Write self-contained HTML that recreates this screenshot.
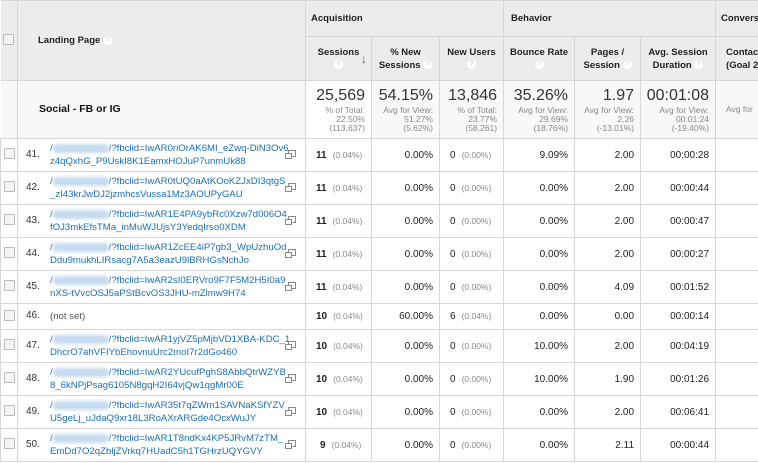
<!DOCTYPE html>
<html><head><meta charset="utf-8"><style>
body{margin:0;width:758px;height:463px;overflow:hidden;background:#fff;font-family:"Liberation Sans",Arial,sans-serif;color:#222}
table{border-collapse:collapse;table-layout:fixed;width:758px}
td{padding:0;border:1px solid #d6d6d6;vertical-align:middle;overflow:hidden;white-space:nowrap}
.h1 td{height:35px;background:#ececec;font-size:9.5px;font-weight:bold;color:#222}
.h2 td{height:43px;background:#ececec;font-size:9.5px;font-weight:bold;text-align:center;line-height:13px;color:#222}
.q{display:inline-block;width:9px;height:9px;border-radius:50%;background:#fff;color:#ccc;font-size:7px;line-height:9px;text-align:center;vertical-align:middle;font-weight:normal}
.sum td{height:57px;background:#f8f8f8;text-align:right;padding-right:6px;font-size:8.5px;color:#888;line-height:9px}
.sum .big{font-size:16px;color:#333;line-height:20px}
.r td{height:32px;font-size:10px;text-align:right;padding-right:6px}
.r.s td{height:25px}
.r td.lp{text-align:left;padding:0;position:relative}
.r td.cb{padding:0;text-align:center}
.box{display:inline-block;width:9px;height:9px;border:1px solid #bbb;background:#f4f4f4;border-radius:1px}
.n{position:absolute;left:8px;top:10px;color:#333}
.u{position:absolute;left:32px;top:3px;color:#1a6fb5;line-height:13px;font-size:9.6px}
.blur{display:inline-block;width:56px;height:9px;background:#c6dbf0;border-radius:4px;vertical-align:middle;filter:blur(1.5px)}
.ic{position:absolute;right:9px;top:11px;width:6px;height:5px;border:1px solid #888;background:#fff}
.ic:before{content:"";position:absolute;left:-4px;top:2px;width:5px;height:4px;border:1px solid #888;background:#fff}
.p{color:#888;font-size:8.5px;margin-left:6px}
.sv{text-align:left!important;padding-left:10px!important}
.sv b{font-weight:bold}
</style></head><body>
<table>
<colgroup><col style="width:17px"><col style="width:288px"><col style="width:66px"><col style="width:68px"><col style="width:64px"><col style="width:71px"><col style="width:66px"><col style="width:75px"><col style="width:43px"></colgroup>
<tr class="h1"><td rowspan="2" style="text-align:center;border-left:none"><span class="box"></span></td><td rowspan="2" style="padding-left:20px">Landing Page <span class="q">?</span></td><td colspan="3" style="padding-left:5px">Acquisition</td><td colspan="3" style="padding-left:7px">Behavior</td><td style="padding-left:5px">Conversions</td></tr>
<tr class="h2"><td style="position:relative">Sessions<br><span class="q">?</span><span style="position:absolute;right:4px;top:16px;font-size:12px;color:#555">&#8595;</span></td><td>% New<br>Sessions <span class="q">?</span></td><td>New Users<br><span class="q">?</span></td><td>Bounce Rate<br><span class="q">?</span></td><td>Pages /<br>Session <span class="q">?</span></td><td>Avg. Session<br>Duration <span class="q">?</span></td><td style="text-align:left;padding-left:10px">Contact<br>(Goal 2 C</td></tr>
<tr class="sum"><td style="border-left:none"></td><td style="text-align:left;padding-left:21px;font-size:10.5px;color:#111;font-weight:bold">Social - FB or IG</td>
<td style="background:#fff"><div class="big">25,569</div>% of Total:<br>22.50%<br>(113,637)</td>
<td><div class="big">54.15%</div>Avg for View:<br>51.27%<br>(5.62%)</td>
<td><div class="big">13,846</div>% of Total:<br>23.77%<br>(58,261)</td>
<td><div class="big">35.26%</div>Avg for View:<br>29.69%<br>(18.76%)</td>
<td><div class="big">1.97</div>Avg for View:<br>2.26<br>(-13.01%)</td>
<td><div class="big">00:01:08</div>Avg for View:<br>00:01:24<br>(-19.40%)</td>
<td style="text-align:left;padding-left:10px">Avg for</td></tr>

<tr class="r"><td class="cb"><span class="box"></span></td><td class="lp"><span class="n">41.</span><span class="u">/<span class="blur"></span>/?fbclid=IwAR0riOrAK6MI_eZwq-DiN3Ov6<br>z4qQxhG_P9UskI8K1EamxHOJuP7unmUk88</span><span class="ic"></span></td><td class="sv"><b>11</b><span class="p">(0.04%)</span></td><td>0.00%</td><td class="sv">0<span class="p">(0.00%)</span></td><td>9.09%</td><td>2.00</td><td>00:00:28</td><td></td></tr>
<tr class="r"><td class="cb"><span class="box"></span></td><td class="lp"><span class="n">42.</span><span class="u">/<span class="blur"></span>/?fbclid=IwAR0tUQ0aAtKOoKZJxDI3qtgS<br>_zI43krJwDJ2jzmhcsVussa1Mz3AOUPyGAU</span><span class="ic"></span></td><td class="sv"><b>11</b><span class="p">(0.04%)</span></td><td>0.00%</td><td class="sv">0<span class="p">(0.00%)</span></td><td>0.00%</td><td>2.00</td><td>00:00:44</td><td></td></tr>
<tr class="r"><td class="cb"><span class="box"></span></td><td class="lp"><span class="n">43.</span><span class="u">/<span class="blur"></span>/?fbclid=IwAR1E4PA9ybRc0Xzw7d006O4<br>fOJ3mkEfsTMa_inMuWJUjsY3YedqIrso0XDM</span><span class="ic"></span></td><td class="sv"><b>11</b><span class="p">(0.04%)</span></td><td>0.00%</td><td class="sv">0<span class="p">(0.00%)</span></td><td>0.00%</td><td>2.00</td><td>00:00:47</td><td></td></tr>
<tr class="r"><td class="cb"><span class="box"></span></td><td class="lp"><span class="n">44.</span><span class="u">/<span class="blur"></span>/?fbclid=IwAR1ZcEE4iP7gb3_WpUzhuOd<br>Ddu9mukhLIRsacg7A5a3eazU9lBRHGsNchJo</span><span class="ic"></span></td><td class="sv"><b>11</b><span class="p">(0.04%)</span></td><td>0.00%</td><td class="sv">0<span class="p">(0.00%)</span></td><td>0.00%</td><td>2.00</td><td>00:00:27</td><td></td></tr>
<tr class="r"><td class="cb"><span class="box"></span></td><td class="lp"><span class="n">45.</span><span class="u">/<span class="blur"></span>/?fbclid=IwAR2sI0ERVro9F7F5M2H5I0a9<br>nXS-tVvcOSJ5aPStBcvOS3JHU-mZlmw9H74</span><span class="ic"></span></td><td class="sv"><b>11</b><span class="p">(0.04%)</span></td><td>0.00%</td><td class="sv">0<span class="p">(0.00%)</span></td><td>0.00%</td><td>4.09</td><td>00:01:52</td><td></td></tr>
<tr class="r s"><td class="cb"><span class="box"></span></td><td class="lp"><span class="n" style="top:6px">46.</span><span class="u" style="top:6px;color:#555">(not set)</span></td><td class="sv"><b>10</b><span class="p">(0.04%)</span></td><td>60.00%</td><td class="sv">6<span class="p">(0.04%)</span></td><td>0.00%</td><td>0.00</td><td>00:00:14</td><td></td></tr>
<tr class="r"><td class="cb"><span class="box"></span></td><td class="lp"><span class="n">47.</span><span class="u">/<span class="blur"></span>/?fbclid=IwAR1yjVZ5pMjbVD1XBA-KDC_1<br>DhcrO7ahVFIYbEhovnuUrc2moI7r2dGo460</span><span class="ic"></span></td><td class="sv"><b>10</b><span class="p">(0.04%)</span></td><td>0.00%</td><td class="sv">0<span class="p">(0.00%)</span></td><td>10.00%</td><td>2.00</td><td>00:04:19</td><td></td></tr>
<tr class="r"><td class="cb"><span class="box"></span></td><td class="lp"><span class="n">48.</span><span class="u">/<span class="blur"></span>/?fbclid=IwAR2YUcufPghS8AbbQtrWZYB<br>8_6kNPjPsag6105N8gqH2I64vjQw1qgMr00E</span><span class="ic"></span></td><td class="sv"><b>10</b><span class="p">(0.04%)</span></td><td>0.00%</td><td class="sv">0<span class="p">(0.00%)</span></td><td>10.00%</td><td>1.90</td><td>00:01:26</td><td></td></tr>
<tr class="r"><td class="cb"><span class="box"></span></td><td class="lp"><span class="n">49.</span><span class="u">/<span class="blur"></span>/?fbclid=IwAR35t7qZWm1SAVNaKSfYZV<br>U5geLj_uJdaQ9xr18L3RoAXrARGde4OcxWuJY</span><span class="ic"></span></td><td class="sv"><b>10</b><span class="p">(0.04%)</span></td><td>0.00%</td><td class="sv">0<span class="p">(0.00%)</span></td><td>0.00%</td><td>2.00</td><td>00:06:41</td><td></td></tr>
<tr class="r"><td class="cb"><span class="box"></span></td><td class="lp"><span class="n">50.</span><span class="u">/<span class="blur"></span>/?fbclid=IwAR1T8ndKx4KP5JRvM7zTM_<br>EmDd7O2qZbljZVrkq7HUadC5h1TGHrzUQYGVY</span><span class="ic"></span></td><td class="sv" style="padding-left:14px!important"><b>9</b><span class="p">(0.04%)</span></td><td>0.00%</td><td class="sv">0<span class="p">(0.00%)</span></td><td>0.00%</td><td>2.11</td><td>00:00:44</td><td></td></tr>
</table>
</body></html>
